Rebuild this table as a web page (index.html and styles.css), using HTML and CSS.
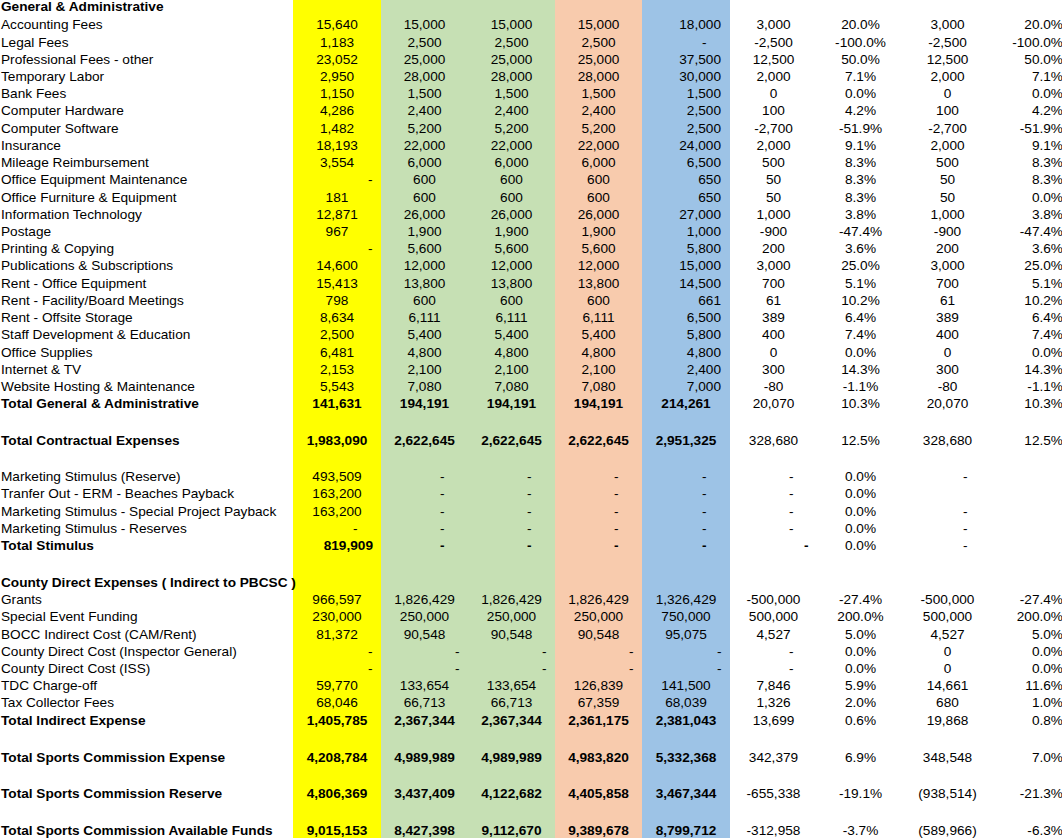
FILE: index.html
```html
<!DOCTYPE html>
<html>
<head>
<meta charset="utf-8">
<link rel="stylesheet" href="styles.css">
</head>
<body>
<div class="sheet">
  <div class="row hd tot"><span>General &amp; Administrative</span><span></span><span></span><span></span><span></span><span></span><span></span><span></span><span></span><span></span></div>
  <div class="row ga"><span>Accounting Fees</span><span>15,640</span><span>15,000</span><span>15,000</span><span>15,000</span><span>18,000</span><span>3,000</span><span>20.0%</span><span>3,000</span><span>20.0%</span></div>
  <div class="row ga"><span>Legal Fees</span><span>1,183</span><span>2,500</span><span>2,500</span><span>2,500</span><span class="d">-</span><span>-2,500</span><span>-100.0%</span><span>-2,500</span><span>-100.0%</span></div>
  <div class="row ga"><span>Professional Fees - other</span><span>23,052</span><span>25,000</span><span>25,000</span><span>25,000</span><span>37,500</span><span>12,500</span><span>50.0%</span><span>12,500</span><span>50.0%</span></div>
  <div class="row ga"><span>Temporary Labor</span><span>2,950</span><span>28,000</span><span>28,000</span><span>28,000</span><span>30,000</span><span>2,000</span><span>7.1%</span><span>2,000</span><span>7.1%</span></div>
  <div class="row ga"><span>Bank Fees</span><span>1,150</span><span>1,500</span><span>1,500</span><span>1,500</span><span>1,500</span><span>0</span><span>0.0%</span><span>0</span><span>0.0%</span></div>
  <div class="row ga"><span>Computer Hardware</span><span>4,286</span><span>2,400</span><span>2,400</span><span>2,400</span><span>2,500</span><span>100</span><span>4.2%</span><span>100</span><span>4.2%</span></div>
  <div class="row ga"><span>Computer Software</span><span>1,482</span><span>5,200</span><span>5,200</span><span>5,200</span><span>2,500</span><span>-2,700</span><span>-51.9%</span><span>-2,700</span><span>-51.9%</span></div>
  <div class="row ga"><span>Insurance</span><span>18,193</span><span>22,000</span><span>22,000</span><span>22,000</span><span>24,000</span><span>2,000</span><span>9.1%</span><span>2,000</span><span>9.1%</span></div>
  <div class="row ga"><span>Mileage Reimbursement</span><span>3,554</span><span>6,000</span><span>6,000</span><span>6,000</span><span>6,500</span><span>500</span><span>8.3%</span><span>500</span><span>8.3%</span></div>
  <div class="row ga"><span>Office Equipment Maintenance</span><span class="e">-</span><span>600</span><span>600</span><span>600</span><span>650</span><span>50</span><span>8.3%</span><span>50</span><span>8.3%</span></div>
  <div class="row ga"><span>Office Furniture &amp; Equipment</span><span>181</span><span>600</span><span>600</span><span>600</span><span>650</span><span>50</span><span>8.3%</span><span>50</span><span>0.0%</span></div>
  <div class="row ga"><span>Information Technology</span><span>12,871</span><span>26,000</span><span>26,000</span><span>26,000</span><span>27,000</span><span>1,000</span><span>3.8%</span><span>1,000</span><span>3.8%</span></div>
  <div class="row ga"><span>Postage</span><span>967</span><span>1,900</span><span>1,900</span><span>1,900</span><span>1,000</span><span>-900</span><span>-47.4%</span><span>-900</span><span>-47.4%</span></div>
  <div class="row ga"><span>Printing &amp; Copying</span><span class="e">-</span><span>5,600</span><span>5,600</span><span>5,600</span><span>5,800</span><span>200</span><span>3.6%</span><span>200</span><span>3.6%</span></div>
  <div class="row ga"><span>Publications &amp; Subscriptions</span><span>14,600</span><span>12,000</span><span>12,000</span><span>12,000</span><span>15,000</span><span>3,000</span><span>25.0%</span><span>3,000</span><span>25.0%</span></div>
  <div class="row ga"><span>Rent - Office Equipment</span><span>15,413</span><span>13,800</span><span>13,800</span><span>13,800</span><span>14,500</span><span>700</span><span>5.1%</span><span>700</span><span>5.1%</span></div>
  <div class="row ga"><span>Rent - Facility/Board Meetings</span><span>798</span><span>600</span><span>600</span><span>600</span><span>661</span><span>61</span><span>10.2%</span><span>61</span><span>10.2%</span></div>
  <div class="row ga"><span>Rent - Offsite Storage</span><span>8,634</span><span>6,111</span><span>6,111</span><span>6,111</span><span>6,500</span><span>389</span><span>6.4%</span><span>389</span><span>6.4%</span></div>
  <div class="row ga"><span>Staff Development &amp; Education</span><span>2,500</span><span>5,400</span><span>5,400</span><span>5,400</span><span>5,800</span><span>400</span><span>7.4%</span><span>400</span><span>7.4%</span></div>
  <div class="row ga"><span>Office Supplies</span><span>6,481</span><span>4,800</span><span>4,800</span><span>4,800</span><span>4,800</span><span>0</span><span>0.0%</span><span>0</span><span>0.0%</span></div>
  <div class="row ga"><span>Internet &amp; TV</span><span>2,153</span><span>2,100</span><span>2,100</span><span>2,100</span><span>2,400</span><span>300</span><span>14.3%</span><span>300</span><span>14.3%</span></div>
  <div class="row ga"><span>Website Hosting &amp; Maintenance</span><span>5,543</span><span>7,080</span><span>7,080</span><span>7,080</span><span>7,000</span><span>-80</span><span>-1.1%</span><span>-80</span><span>-1.1%</span></div>
  <div class="row tot"><span>Total General &amp; Administrative</span><span>141,631</span><span>194,191</span><span>194,191</span><span>194,191</span><span>214,261</span><span>20,070</span><span>10.3%</span><span>20,070</span><span>10.3%</span></div>
  <div class="sp"></div>
  <div class="row tot"><span>Total Contractual Expenses</span><span>1,983,090</span><span>2,622,645</span><span>2,622,645</span><span>2,622,645</span><span>2,951,325</span><span>328,680</span><span>12.5%</span><span>328,680</span><span>12.5%</span></div>
  <div class="sp sp-short"></div>
  <div class="row"><span>Marketing Stimulus (Reserve)</span><span>493,509</span><span class="d">-</span><span class="d">-</span><span class="d">-</span><span class="d">-</span><span class="d">-</span><span>0.0%</span><span class="d">-</span><span></span></div>
  <div class="row"><span>Tranfer Out - ERM - Beaches Payback</span><span>163,200</span><span class="d">-</span><span class="d">-</span><span class="d">-</span><span class="d">-</span><span class="d">-</span><span>0.0%</span><span></span><span></span></div>
  <div class="row"><span>Marketing Stimulus - Special Project Payback</span><span>163,200</span><span class="d">-</span><span class="d">-</span><span class="d">-</span><span class="d">-</span><span class="d">-</span><span>0.0%</span><span class="d">-</span><span></span></div>
  <div class="row"><span>Marketing Stimulus - Reserves</span><span class="d">-</span><span class="d">-</span><span class="d">-</span><span class="d">-</span><span class="d">-</span><span class="d">-</span><span>0.0%</span><span class="d">-</span><span></span></div>
  <div class="row tot"><span>Total Stimulus</span><span class="r">819,909</span><span class="d">-</span><span class="d">-</span><span class="d">-</span><span class="d">-</span><span class="e b">-</span><span>0.0%</span><span class="d">-</span><span></span></div>
  <div class="sp"></div>
  <div class="row tot"><span>County Direct Expenses ( Indirect to PBCSC )</span><span></span><span></span><span></span><span></span><span></span><span></span><span></span><span></span><span></span></div>
  <div class="row"><span>Grants</span><span>966,597</span><span>1,826,429</span><span>1,826,429</span><span>1,826,429</span><span>1,326,429</span><span>-500,000</span><span>-27.4%</span><span>-500,000</span><span>-27.4%</span></div>
  <div class="row"><span>Special Event Funding</span><span>230,000</span><span>250,000</span><span>250,000</span><span>250,000</span><span>750,000</span><span>500,000</span><span>200.0%</span><span>500,000</span><span>200.0%</span></div>
  <div class="row"><span>BOCC Indirect Cost (CAM/Rent)</span><span>81,372</span><span>90,548</span><span>90,548</span><span>90,548</span><span>95,075</span><span>4,527</span><span>5.0%</span><span>4,527</span><span>5.0%</span></div>
  <div class="row"><span>County Direct Cost (Inspector General)</span><span class="e">-</span><span class="e">-</span><span class="e">-</span><span class="e">-</span><span class="e">-</span><span class="d">-</span><span>0.0%</span><span>0</span><span>0.0%</span></div>
  <div class="row"><span>County Direct Cost (ISS)</span><span class="e">-</span><span class="e">-</span><span class="e">-</span><span class="e">-</span><span class="e">-</span><span class="d">-</span><span>0.0%</span><span>0</span><span>0.0%</span></div>
  <div class="row"><span>TDC Charge-off</span><span>59,770</span><span>133,654</span><span>133,654</span><span>126,839</span><span>141,500</span><span>7,846</span><span>5.9%</span><span>14,661</span><span>11.6%</span></div>
  <div class="row"><span>Tax Collector Fees</span><span>68,046</span><span>66,713</span><span>66,713</span><span>67,359</span><span>68,039</span><span>1,326</span><span>2.0%</span><span>680</span><span>1.0%</span></div>
  <div class="row tot"><span>Total Indirect Expense</span><span>1,405,785</span><span>2,367,344</span><span>2,367,344</span><span>2,361,175</span><span>2,381,043</span><span>13,699</span><span>0.6%</span><span>19,868</span><span>0.8%</span></div>
  <div class="sp"></div>
  <div class="row tot"><span>Total Sports Commission Expense</span><span>4,208,784</span><span>4,989,989</span><span>4,989,989</span><span>4,983,820</span><span>5,332,368</span><span>342,379</span><span>6.9%</span><span>348,548</span><span>7.0%</span></div>
  <div class="sp"></div>
  <div class="row tot"><span>Total Sports Commission Reserve</span><span>4,806,369</span><span>3,437,409</span><span>4,122,682</span><span>4,405,858</span><span>3,467,344</span><span>-655,338</span><span>-19.1%</span><span>(938,514)</span><span>-21.3%</span></div>
  <div class="sp"></div>
  <div class="row tot"><span>Total Sports Commission Available Funds</span><span>9,015,153</span><span>8,427,398</span><span>9,112,670</span><span>9,389,678</span><span>8,799,712</span><span>-312,958</span><span>-3.7%</span><span>(589,966)</span><span>-6.3%</span></div>
</div>
</body>
</html>
```

FILE: styles.css
```css
html, body {
  margin: 0;
  padding: 0;
  overflow: hidden;
  background: #fff;
}

body {
  font-family: "Liberation Sans", Arial, sans-serif;
  font-size: 13.65px;
  color: #000;
}

.sheet {
  width: 1066px;
  background: linear-gradient(to right,
    #ffffff 0 293px,
    #ffff00 293px 381px,
    #c6e0b4 381px 555px,
    #f8cbad 555px 642px,
    #9dc3e6 642px 730px,
    #ffffff 730px);
}

.row {
  display: grid;
  grid-template-columns: 293px 88px 87px 87px 87px 88px 87px 87px 87px 75px;
  height: 17.23px;
  line-height: 17.23px;
  white-space: nowrap;
}

.row > span {
  display: block;
  min-width: 0;
}

.row > :first-child {
  padding-left: 1px;
}

.row > :nth-child(n+2) {
  text-align: center;
}

.row > :nth-child(10) {
  text-align: right;
  padding-right: 3px;
}

.ga > :nth-child(6) {
  text-align: right;
  padding-right: 9px;
}

.tot > :nth-child(-n+6) {
  font-weight: bold;
}

.row > .d {
  text-align: right;
  padding-right: 23.5px;
}

.row > .e {
  text-align: right;
  padding-right: 8.5px;
}

.row > .r {
  text-align: right;
  padding-right: 8px;
}

.row > .b {
  font-weight: bold;
}

.hd {
  height: 16.4px;
  line-height: 13px;
}

.sp {
  height: 19.7px;
}

.sp-short {
  height: 18.8px;
}
```
